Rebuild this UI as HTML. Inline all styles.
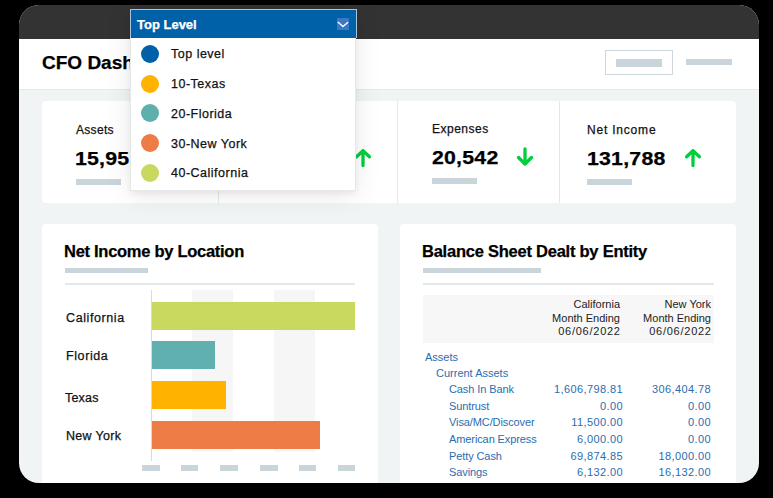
<!DOCTYPE html>
<html><head><meta charset="utf-8">
<style>
*{margin:0;padding:0;box-sizing:border-box}
html,body{width:773px;height:498px;overflow:hidden;background:#000;font-family:"Liberation Sans",sans-serif}
.abs{position:absolute}
#card{position:absolute;left:19px;top:5px;width:740px;height:478px;border-radius:20px;overflow:hidden;background:#f1f4f5}
#topbar{position:absolute;left:0;top:0;width:740px;height:33.5px;background:#333333}
#header{position:absolute;left:0;top:33.5px;width:740px;height:51px;background:#fff;border-bottom:1px solid #e6e9eb}
.t{position:absolute;white-space:nowrap;line-height:1;-webkit-text-stroke:0.25px currentColor}
.gbar{position:absolute;background:#cad4db}
.panel{position:absolute;background:#fff;border-radius:4px}
</style></head><body>
<div id="card">
  <div id="topbar"></div>
  <div id="header"></div>
</div>

<!-- header title -->
<div class="t" style="left:42px;top:53px;font-size:19px;font-weight:bold;color:#000">CFO Dashboard</div>
<div class="abs" style="left:605px;top:50px;width:68px;height:25px;border:1px solid #cdd6db"></div>
<div class="gbar" style="left:616px;top:59px;width:46px;height:7.5px"></div>
<div class="gbar" style="left:686px;top:59px;width:46px;height:6px"></div>

<!-- KPI card -->
<div class="panel" style="left:42px;top:101px;width:694px;height:102px"></div>
<div class="abs" style="left:218px;top:101px;width:1px;height:102px;background:#e4e8ea"></div>
<div class="abs" style="left:397px;top:101px;width:1px;height:102px;background:#e4e8ea"></div>
<div class="abs" style="left:559px;top:101px;width:1px;height:102px;background:#e4e8ea"></div>

<div class="t" style="left:76px;top:124px;font-size:12px;letter-spacing:0.3px;color:#111">Assets</div>
<div class="t" style="left:75px;top:150px;font-size:18.5px;letter-spacing:0.2px;transform:scaleX(1.15);transform-origin:0 0;font-weight:bold;color:#000">15,957</div>
<div class="gbar" style="left:76px;top:179px;width:45px;height:6px"></div>

<div class="t" style="left:432px;top:123px;font-size:12px;letter-spacing:0.5px;color:#111">Expenses</div>
<div class="t" style="left:432px;top:149px;font-size:18.5px;letter-spacing:0.2px;transform:scaleX(1.15);transform-origin:0 0;font-weight:bold;color:#000">20,542</div>
<div class="gbar" style="left:432px;top:178px;width:45px;height:6px"></div>

<div class="t" style="left:587px;top:124px;font-size:12px;letter-spacing:0.8px;color:#111">Net Income</div>
<div class="t" style="left:587px;top:150px;font-size:18.5px;letter-spacing:0.2px;transform:scaleX(1.15);transform-origin:0 0;font-weight:bold;color:#000">131,788</div>
<div class="gbar" style="left:587px;top:179px;width:45px;height:6px"></div>

<!-- arrows -->
<svg class="abs" style="left:353.5px;top:148px" width="18" height="20" viewBox="0 0 18 20"><path d="M9 17.5V2.6M2.6 8.8L9 2.6l6.4 6.2" fill="none" stroke="#00cf3c" stroke-width="3.3" stroke-linecap="round" stroke-linejoin="round"/></svg>
<svg class="abs" style="left:516px;top:147px" width="18" height="20" viewBox="0 0 18 20"><path d="M9 2v15M2.5 10.5L9 17l6.5-6.5" fill="none" stroke="#00cf3c" stroke-width="3.3" stroke-linecap="round" stroke-linejoin="round"/></svg>
<svg class="abs" style="left:684px;top:148px" width="18" height="20" viewBox="0 0 18 20"><path d="M9 17.5V2.6M2.6 8.8L9 2.6l6.4 6.2" fill="none" stroke="#00cf3c" stroke-width="3.3" stroke-linecap="round" stroke-linejoin="round"/></svg>

<!-- left panel -->
<div class="panel" style="left:42px;top:224px;width:336px;height:300px"></div>
<div class="t" style="left:64px;top:243px;font-size:16.5px;letter-spacing:-0.28px;font-weight:bold;color:#000">Net Income by Location</div>
<div class="gbar" style="left:65px;top:268px;width:83px;height:5px"></div>
<div class="abs" style="left:65px;top:283px;width:290px;height:2px;background:#e3e8eb"></div>

<div class="abs" style="left:192px;top:290px;width:41px;height:162px;background:#f6f6f6"></div>
<div class="abs" style="left:274px;top:290px;width:41px;height:162px;background:#f6f6f6"></div>
<div class="abs" style="left:150.5px;top:290px;width:1.5px;height:171px;background:#d3dce2"></div>

<div class="abs" style="left:152px;top:301.5px;width:203px;height:28.5px;background:#c9d85e"></div>
<div class="abs" style="left:152px;top:341px;width:63px;height:28px;background:#5fb0ae"></div>
<div class="abs" style="left:152px;top:381px;width:74px;height:28px;background:#ffb300"></div>
<div class="abs" style="left:152px;top:421px;width:168px;height:28px;background:#ed7c47"></div>

<div class="t" style="left:66px;top:312px;font-size:12.5px;letter-spacing:0.6px;color:#111">California</div>
<div class="t" style="left:66px;top:350px;font-size:12.5px;letter-spacing:0.6px;color:#111">Florida</div>
<div class="t" style="left:65px;top:392px;font-size:12.5px;letter-spacing:0.2px;color:#111">Texas</div>
<div class="t" style="left:66px;top:430px;font-size:12.5px;letter-spacing:0.3px;color:#111">New York</div>

<div class="gbar" style="left:142px;top:465px;width:18px;height:5.5px"></div>
<div class="gbar" style="left:181px;top:465px;width:17px;height:5.5px"></div>
<div class="gbar" style="left:220px;top:465px;width:18px;height:5.5px"></div>
<div class="gbar" style="left:260px;top:465px;width:18px;height:5.5px"></div>
<div class="gbar" style="left:299px;top:465px;width:17px;height:5.5px"></div>
<div class="gbar" style="left:338px;top:465px;width:17px;height:5.5px"></div>

<!-- right panel -->
<div class="panel" style="left:400px;top:224px;width:336px;height:300px"></div>
<div class="t" style="left:422px;top:243px;font-size:16.5px;letter-spacing:-0.24px;font-weight:bold;color:#000">Balance Sheet Dealt by Entity</div>
<div class="gbar" style="left:423px;top:268px;width:118px;height:5px"></div>
<div class="abs" style="left:423px;top:283px;width:291px;height:2px;background:#e3e8eb"></div>
<div class="abs" style="left:423px;top:295px;width:291px;height:48px;background:#f7f7f7"></div>

<div class="t" style="left:520px;top:298px;width:100px;text-align:right;font-size:11px;-webkit-text-stroke:0;line-height:13.5px;color:#222">California<br>Month Ending<br><span style="letter-spacing:0.75px;margin-right:-0.75px">06/06/2022</span></div>
<div class="t" style="left:611px;top:298px;width:100px;text-align:right;font-size:11px;-webkit-text-stroke:0;line-height:13.5px;color:#222">New York<br>Month Ending<br><span style="letter-spacing:0.75px;margin-right:-0.75px">06/06/2022</span></div>

<div class="t" style="left:425px;top:352px;font-size:11px;-webkit-text-stroke:0;color:#2a6db0">Assets</div>
<div class="t" style="left:436px;top:368px;font-size:11px;-webkit-text-stroke:0;color:#2a6db0">Current Assets</div>
<div class="t" style="left:449px;top:380.9px;font-size:11px;-webkit-text-stroke:0;line-height:16.65px;letter-spacing:-0.1px;color:#2a6db0">Cash In Bank<br>Suntrust<br>Visa/MC/Discover<br>American Express<br>Petty Cash<br>Savings</div>
<div class="t" style="left:523px;top:380.9px;width:100px;text-align:right;font-size:11px;-webkit-text-stroke:0;line-height:16.65px;letter-spacing:0.4px;color:#2a6db0">1,606,798.81<br>0.00<br>11,500.00<br>6,000.00<br>69,874.85<br>6,132.00</div>
<div class="t" style="left:611px;top:380.9px;width:100px;text-align:right;font-size:11px;-webkit-text-stroke:0;line-height:16.65px;letter-spacing:0.4px;color:#2a6db0">306,404.78<br>0.00<br>0.00<br>0.00<br>18,000.00<br>16,132.00</div>

<!-- black mask outside the card (bottom) -->
<div class="abs" style="left:0;top:483px;width:773px;height:15px;background:#000"></div>

<!-- dropdown -->
<div class="abs" style="left:130px;top:9px;width:226px;height:182px;background:#fff;box-shadow:0 3px 6px rgba(0,0,0,.06),0 4px 26px rgba(0,0,0,.09);border:1px solid #e6e8ea"></div>
<div class="abs" style="left:130px;top:9px;width:227px;height:29px;background:#0060a8;border:1px solid #a9c3dc;border-bottom:none"></div>
<div class="t" style="left:137px;top:18px;font-size:13px;font-weight:bold;color:#fff">Top Level</div>
<div class="abs" style="left:337px;top:18px;width:12px;height:12px;background:#3a78c4"></div>
<svg class="abs" style="left:337px;top:18px" width="12" height="12" viewBox="0 0 12 12"><path d="M1.1 4.3L6 8.6l4.7-4.2" fill="none" stroke="#fff" stroke-width="1.35" stroke-linecap="round" stroke-linejoin="round"/></svg>

<div class="abs" style="left:141px;top:44.5px;width:18px;height:18px;border-radius:50%;background:#0060a8"></div>
<div class="abs" style="left:141px;top:74.5px;width:18px;height:18px;border-radius:50%;background:#ffb300"></div>
<div class="abs" style="left:141px;top:104px;width:18px;height:18px;border-radius:50%;background:#5fafad"></div>
<div class="abs" style="left:141px;top:134px;width:18px;height:18px;border-radius:50%;background:#ed7c47"></div>
<div class="abs" style="left:141px;top:163.5px;width:18px;height:18px;border-radius:50%;background:#c9d85e"></div>
<div class="t" style="left:171px;top:48px;font-size:12.5px;letter-spacing:0.5px;color:#111">Top level</div>
<div class="t" style="left:171px;top:78px;font-size:12.5px;letter-spacing:0.5px;color:#111">10-Texas</div>
<div class="t" style="left:171px;top:108px;font-size:12.5px;letter-spacing:0.5px;color:#111">20-Florida</div>
<div class="t" style="left:171px;top:138px;font-size:12.5px;letter-spacing:0.5px;color:#111">30-New York</div>
<div class="t" style="left:171px;top:167px;font-size:12.5px;letter-spacing:0.5px;color:#111">40-California</div>
</body></html>
